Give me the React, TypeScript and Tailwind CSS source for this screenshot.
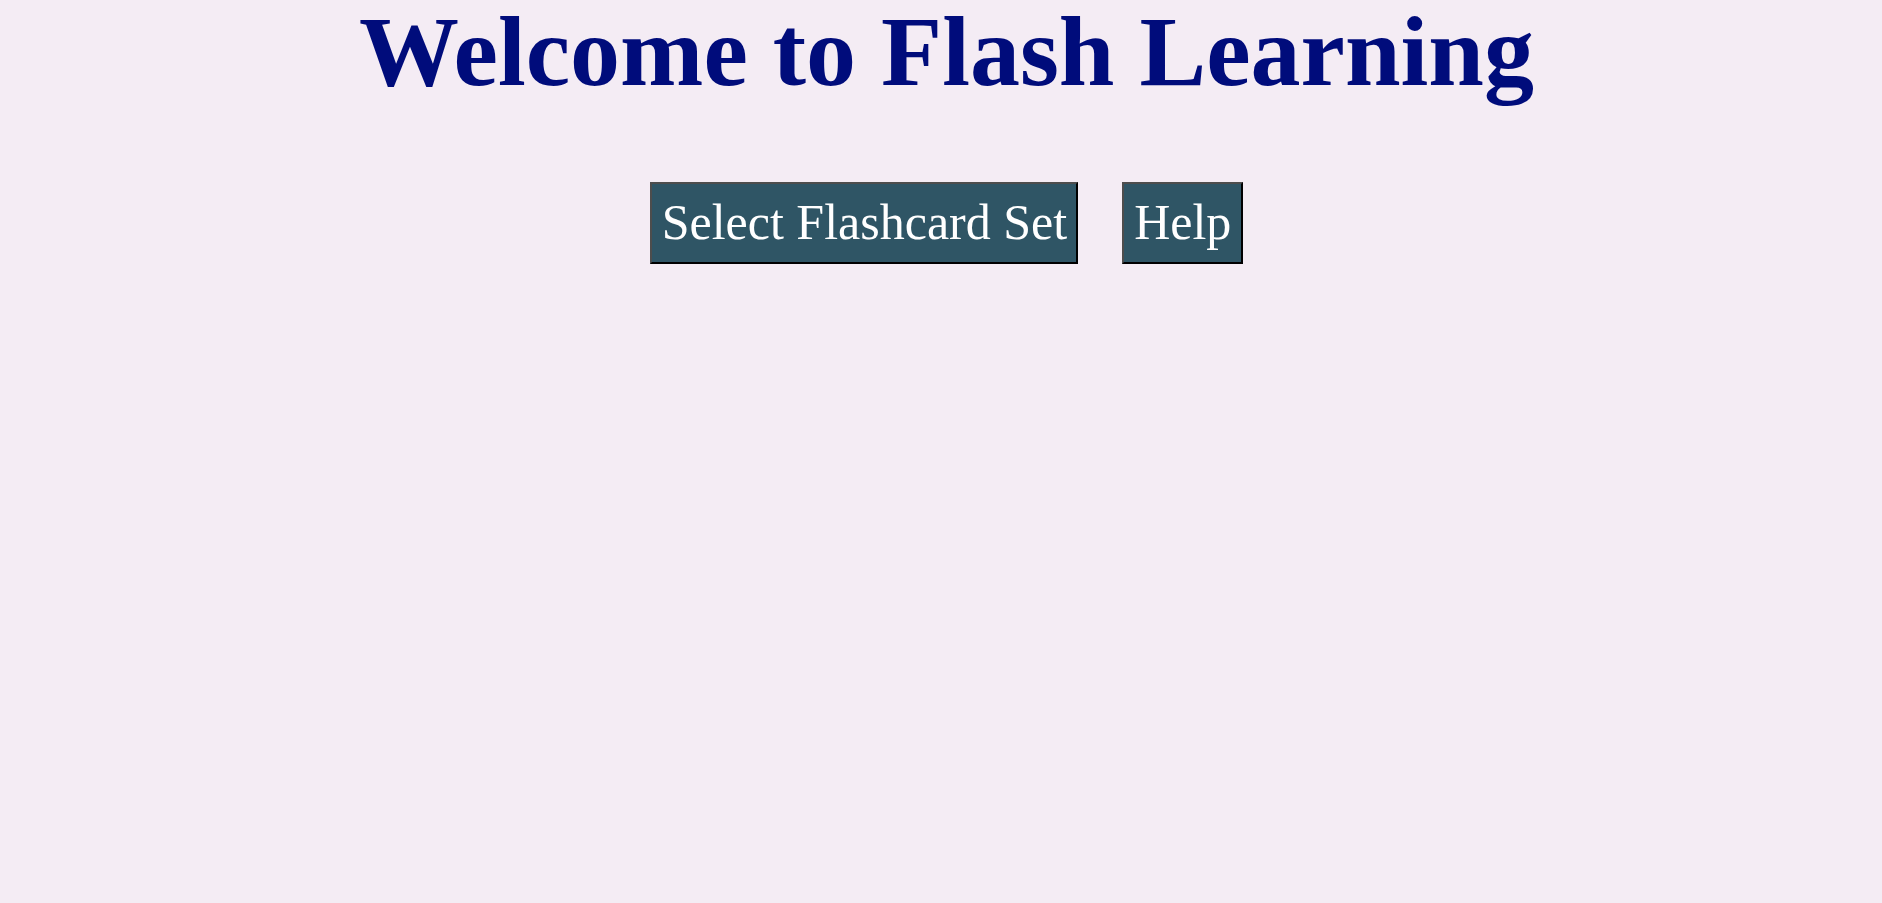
export default function App() {
  return (
    <div
      className="min-h-[903px] w-full bg-[#f4ecf4] pl-[11px] flex flex-col items-center"
      style={{ fontFamily: '"Liberation Serif", "Times New Roman", serif' }}
    >
      <h1 className="text-[100px] leading-[104px] font-bold text-[#000c7b] whitespace-nowrap">
        Welcome to Flash Learning
      </h1>
      <div className="mt-[78px] flex items-start gap-[44px]">
        <button className="bg-[#2f5565] text-white text-[50px] leading-[58px] pl-[10px] pr-[9px] pt-[9px] pb-[11px] border-2 border-t-[#4d4d4d] border-l-[#4d4d4d] border-b-black border-r-black whitespace-nowrap">
          Select Flashcard Set
        </button>
        <button className="bg-[#2f5565] text-white text-[50px] leading-[58px] px-[10px] pt-[9px] pb-[11px] border-2 border-t-[#4d4d4d] border-l-[#4d4d4d] border-b-black border-r-black whitespace-nowrap">
          Help
        </button>
      </div>
    </div>
  );
}
